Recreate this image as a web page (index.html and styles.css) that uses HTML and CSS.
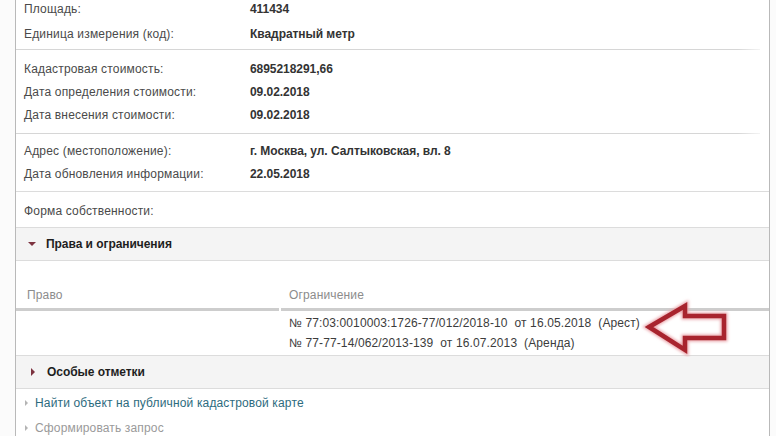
FILE: index.html
```html
<!DOCTYPE html>
<html lang="ru">
<head>
<meta charset="utf-8">
<title>Информация об объекте</title>
<link rel="stylesheet" href="styles.css">
</head>
<body>
<div class="panel">
  <div class="group g1">
    <div class="row"><span class="label">Площадь:</span><span class="value">411434</span></div>
    <div class="row"><span class="label">Единица измерения (код):</span><span class="value">Квадратный метр</span></div>
  </div>
  <div class="sep"></div>
  <div class="group g2">
    <div class="row"><span class="label">Кадастровая стоимость:</span><span class="value">6895218291,66</span></div>
    <div class="row"><span class="label">Дата определения стоимости:</span><span class="value">09.02.2018</span></div>
    <div class="row"><span class="label">Дата внесения стоимости:</span><span class="value">09.02.2018</span></div>
  </div>
  <div class="sep"></div>
  <div class="group g3">
    <div class="row"><span class="label">Адрес (местоположение):</span><span class="value">г. Москва, ул. Салтыковская, вл. 8</span></div>
    <div class="row"><span class="label">Дата обновления информации:</span><span class="value">22.05.2018</span></div>
  </div>
  <div class="group g4">
    <div class="row"><span class="label">Форма собственности:</span></div>
  </div>
  <div class="section open">
    <span class="tri-down"></span><span class="section-title">Права и ограничения</span>
  </div>
  <div class="rights">
    <div class="thead">
      <div class="th col1">Право</div>
      <div class="th col2">Ограничение</div>
    </div>
    <div class="tbody">
      <div class="td col1"></div>
      <div class="td col2">
        <div class="line">№ 77:03:0010003:1726-77/012/2018-10&nbsp; от 16.05.2018&nbsp; (Арест)</div>
        <div class="line">№ 77-77-14/062/2013-139&nbsp; от 16.07.2013&nbsp; (Аренда)</div>
      </div>
    </div>
    <svg class="arrow" width="96" height="60" viewBox="0 0 96 60">
      <defs>
        <filter id="glow" x="-20%" y="-30%" width="140%" height="160%">
          <feGaussianBlur stdDeviation="1.6"/>
        </filter>
      </defs>
      <polygon points="8,30 44,9 44,19 83,19 83,41 44,41 44,53" fill="none" stroke="#eaa3a9" stroke-width="7" stroke-linejoin="miter" filter="url(#glow)"/>
      <polygon points="8,30 44,9 44,19 83,19 83,41 44,41 44,53" fill="none" stroke="#a8242e" stroke-width="4.5" stroke-linejoin="miter"/>
    </svg>
  </div>
  <div class="section closed">
    <span class="tri-right"></span><span class="section-title">Особые отметки</span>
  </div>
  <div class="links">
    <div class="link-row"><span class="lk-arrow"></span><a class="link" href="#">Найти объект на публичной кадастровой карте</a></div>
    <div class="link-row"><span class="lk-arrow"></span><span class="link disabled">Сформировать запрос</span></div>
  </div>
</div>
</body>
</html>
```
FILE: styles.css
```css
html, body {
  margin: 0;
  padding: 0;
  background: #ffffff;
}
body {
  font-family: "Liberation Sans", Arial, sans-serif;
  font-size: 12px;
  color: #444;
  height: 436px;
  overflow: hidden;
  background: #fbfbfb;
}
.panel {
  margin-left: 15px;
  margin-top: -4px;
  width: 753px;
  border-left: 1px solid #b9b9b9;
  border-right: 1px solid #b9b9b9;
  background: #fff;
  position: relative;
}
.group {
  padding: 0 0 0 8px;
}
.row {
  display: flex;
  height: 23px;
  align-items: center;
}
.label {
  width: 226px;
  color: #4a4a4a;
  flex: none;
  letter-spacing: 0.18px;
}
.value {
  font-weight: bold;
  color: #333;
  letter-spacing: -0.05px;
}
.g1 { padding-top: 0; padding-bottom: 3px; }
.g1 .row:first-child { height: 25px; }
.g1 .row:nth-child(2) { height: 25px; }
.sep {
  height: 1px;
  margin-right: 9px;
  background: linear-gradient(to right, #d6d6d6 97%, #f4f4f4);
}
.g2 { padding-top: 7px; padding-bottom: 7px; }
.g3 { padding-top: 5px; padding-bottom: 6px; border-bottom: 1px solid #dcdcdc; }
.g4 { padding-top: 7px; padding-bottom: 5px; }
.g4 .row { height: 23px; }
.section {
  height: 32px;
  background: #f4f4f4;
  border-top: 1px solid #dcdcdc;
  border-bottom: 1px solid #dcdcdc;
  display: flex;
  align-items: center;
  padding-left: 12px;
}
.section-title {
  font-weight: bold;
  color: #1e1e1e;
  font-size: 12px;
  letter-spacing: -0.05px;
}
.tri-down {
  width: 0;
  height: 0;
  border-left: 4px solid transparent;
  border-right: 4px solid transparent;
  border-top: 4px solid #7d3340;
  margin-right: 10px;
  margin-left: 0;
}
.tri-right {
  width: 0;
  height: 0;
  border-top: 4px solid transparent;
  border-bottom: 4px solid transparent;
  border-left: 4px solid #7d3340;
  margin-right: 12px;
  margin-left: 3px;
}
.rights {
  position: relative;
  padding-top: 25px;
}
.thead {
  display: flex;
  gap: 2px;
}
.th {
  color: #8c8c8c;
  height: 22px;
  line-height: 18px;
  border-bottom: 3px solid #cdcdcd;
  letter-spacing: 0.15px;
}
.col1 {
  width: 252px;
  padding-left: 11px;
  flex: none;
}
.col2 {
  flex: 1;
  padding-left: 8px;
}
.tbody {
  display: flex;
  gap: 2px;
  padding: 2px 0 2px;
}
.td .line {
  height: 20px;
  line-height: 20px;
  color: #3c3c3c;
  letter-spacing: 0.12px;
}
.arrow {
  position: absolute;
  left: 625px;
  top: 36px;
}
.links {
  padding-left: 8px;
}
.link-row {
  display: flex;
  align-items: center;
  height: 25px;
  letter-spacing: 0.15px;
}
.link-row:first-child { margin-top: 1px; }
.lk-arrow {
  width: 0;
  height: 0;
  border-top: 3px solid transparent;
  border-bottom: 3px solid transparent;
  border-left: 3px solid #b4b4b4;
  margin-left: 1px;
  margin-right: 7px;
}
.link {
  color: #2d6b7e;
  text-decoration: none;
}
.link.disabled {
  color: #9a9a9a;
}
```
